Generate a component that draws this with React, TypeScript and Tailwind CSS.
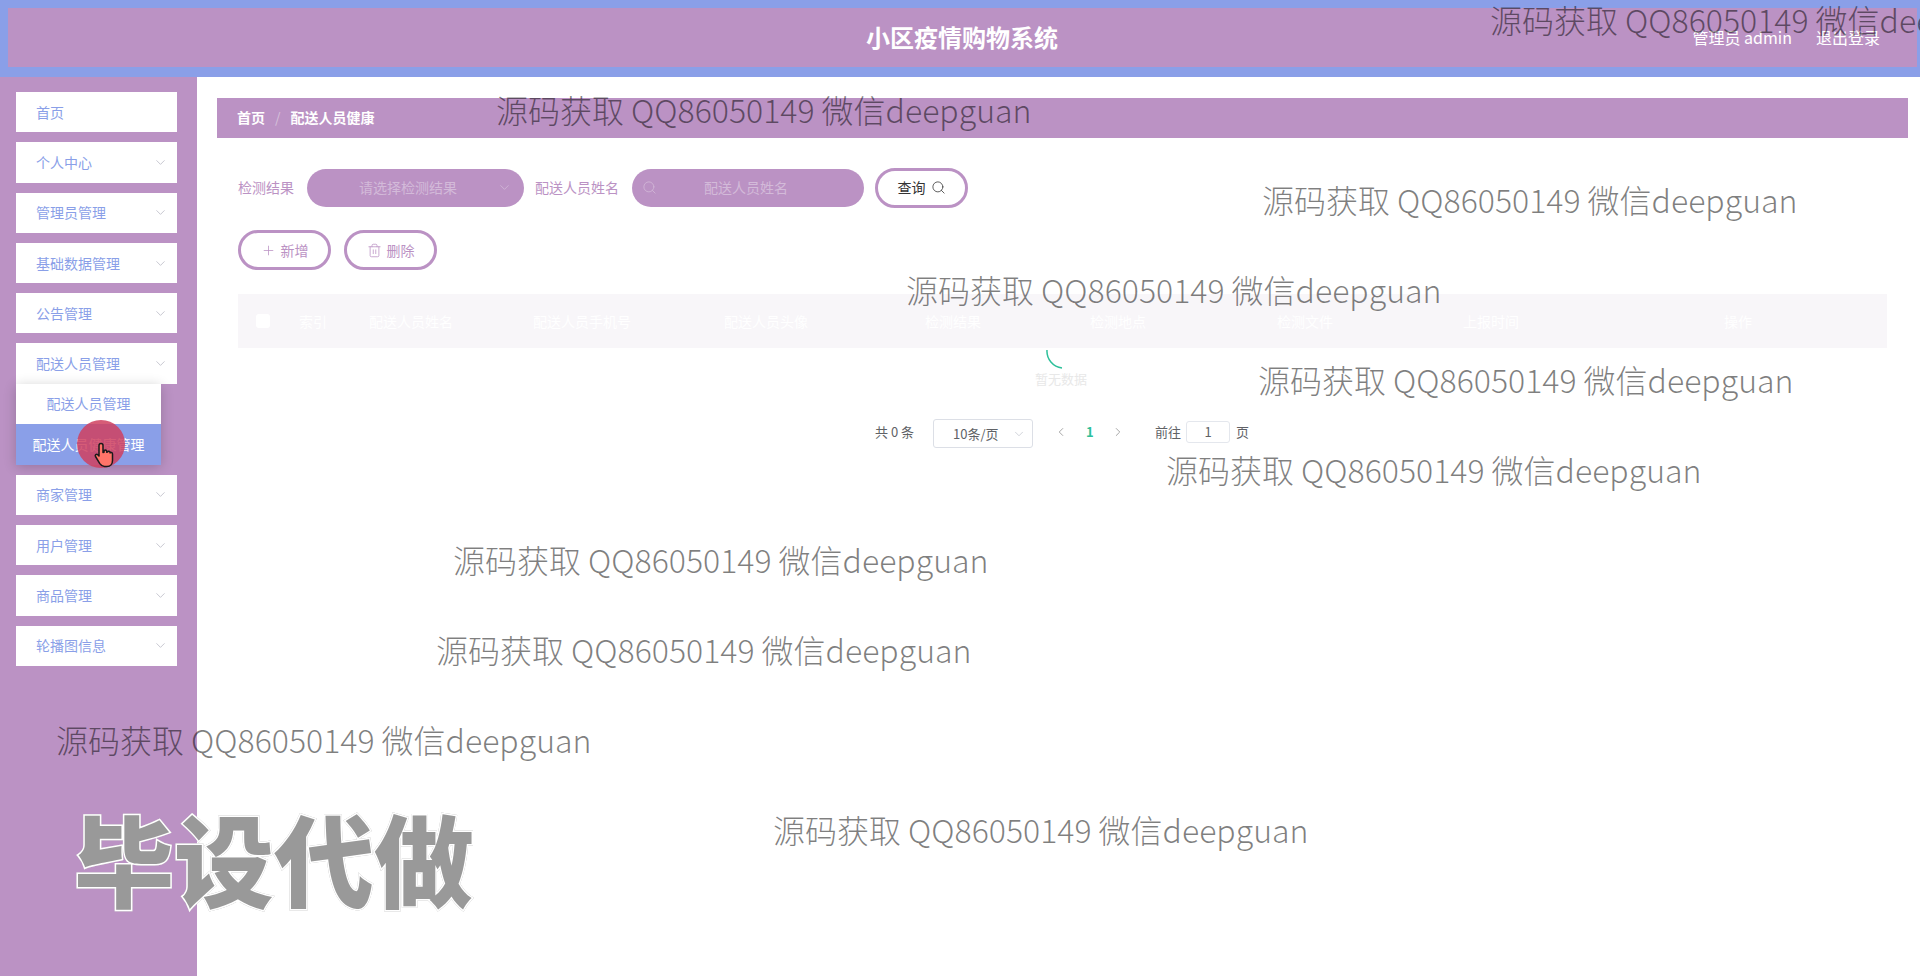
import { ChevronDown, ChevronLeft, ChevronRight, Plus, Search, Trash2 } from "lucide-react";

const menus = ["首页", "个人中心", "管理员管理", "基础数据管理", "公告管理", "配送人员管理"];
const menusAfter = ["商家管理", "用户管理", "商品管理", "轮播图信息"];

const columns = [
  { label: "索引", width: "w-[70px]" },
  { label: "配送人员姓名", width: "w-[164px]" },
  { label: "配送人员手机号", width: "w-[191px]" },
  { label: "配送人员头像", width: "w-[201px]" },
  { label: "检测结果", width: "w-[165px]" },
  { label: "检测地点", width: "w-[187px]" },
  { label: "检测文件", width: "w-[186px]" },
  { label: "上报时间", width: "w-[261px]" },
  { label: "操作", width: "w-[60px]" },
];

const watermarks = [
  "left-[1490px] top-[-5px]",
  "left-[496px] top-[85px]",
  "left-[1262px] top-[175px]",
  "left-[906px] top-[265px]",
  "left-[1258px] top-[355px]",
  "left-[1166px] top-[445px]",
  "left-[453px] top-[535px]",
  "left-[436px] top-[625px]",
  "left-[56px] top-[715px]",
  "left-[773px] top-[805px]",
];

function MenuItem({ label, arrow = true }: { label: string; arrow?: boolean }) {
  return (
    <div className="flex h-[40.3px] w-[161px] items-center justify-between bg-white pl-[20px] pr-[9px] text-[14px] text-[#8a9fe8]">
      <span>{label}</span>
      {arrow && <ChevronDown className="h-[15px] w-[15px] text-[#b9b9c4]" strokeWidth={1.25} />}
    </div>
  );
}

export default function App() {
  return (
    <div className="relative h-[976px] w-[1920px] overflow-hidden bg-white font-['Noto_Sans_CJK_SC','Noto_Sans',sans-serif]">
      <header className="flex h-[77px] items-center justify-between border-b-[10px] border-l-[8px] border-r-[3px] border-t-[8px] border-[#8a9fe8] bg-[#bb92c4] pb-[2px] pr-[37px]">
        <div className="pl-[858px] text-[24px] font-bold text-white">小区疫情购物系统</div>
        <div className="flex items-center gap-[24px] text-[16px] text-white">
          <span>管理员 admin</span>
          <span>退出登录</span>
        </div>
      </header>

      <div className="flex h-[899px]">
        <aside className="flex w-[197px] shrink-0 flex-col gap-[10px] bg-[#bb92c4] pl-[16px] pt-[15px]">
          {menus.map((m, i) => (
            <MenuItem key={m} label={m} arrow={i > 0} />
          ))}
          <div className="-mt-[10px] w-[145px] text-[14px] shadow-[0_2px_12px_rgba(0,0,0,0.2)]">
            <div className="flex h-[40px] items-center justify-center bg-white text-[#8a9fe8]">配送人员管理</div>
            <div className="flex h-[41px] items-center justify-center bg-[#8a9fe8] text-white">配送人员健康管理</div>
          </div>
          {menusAfter.map((m) => (
            <MenuItem key={m} label={m} />
          ))}
        </aside>

        <main className="flex-1 px-[20px] pt-[21px]">
          <div className="flex h-[40px] w-[1691px] items-center gap-[10px] bg-[#bb92c4] pb-[2px] pl-[20px] text-[14px] font-bold text-white">
            <span>首页</span>
            <span className="font-normal text-[#d5c0da]">/</span>
            <span>配送人员健康</span>
          </div>

          <div className="ml-[21px] mt-[31px] flex h-[38px] items-center text-[14px]">
            <span className="w-[69px] pb-[2px] text-[#bb92c4]">检测结果</span>
            <div className="flex h-[38px] w-[217px] items-center justify-between rounded-full bg-[#bb92c4] pb-[2px] pl-[52px] pr-[12px] text-[#d3bad9]">
              <span>请选择检测结果</span>
              <ChevronDown className="h-[15px] w-[15px]" strokeWidth={1.25} />
            </div>
            <span className="ml-[11px] w-[97px] pb-[2px] text-[#bb92c4]">配送人员姓名</span>
            <div className="flex h-[38px] w-[232px] items-center rounded-full bg-[#bb92c4] pb-[1px] pl-[10px] text-[#d3bad9]">
              <Search className="h-[15px] w-[15px]" strokeWidth={1.25} />
              <span className="ml-[47px]">配送人员姓名</span>
            </div>
            <div className="ml-[11px] flex h-[40px] w-[93px] items-center justify-center gap-[5px] rounded-full border-[3px] border-[#bb92c4] bg-white pb-[1px] text-[#333]">
              <span>查询</span>
              <Search className="h-[15px] w-[15px]" strokeWidth={1.25} />
            </div>
          </div>

          <div className="ml-[21px] mt-[23px] flex gap-[13px] text-[14px] text-[#bb92c4]">
            <div className="flex h-[40px] w-[93px] items-center justify-center gap-[5px] rounded-full border-[3px] border-[#bb92c4] bg-white">
              <Plus className="h-[15px] w-[15px]" strokeWidth={1.25} />
              <span>新增</span>
            </div>
            <div className="flex h-[40px] w-[93px] items-center justify-center gap-[5px] rounded-full border-[3px] border-[#bb92c4] bg-white">
              <Trash2 className="h-[15px] w-[15px]" strokeWidth={1.25} />
              <span>删除</span>
            </div>
          </div>

          <div className="ml-[21px] mt-[24px] flex h-[54px] w-[1649px] items-center bg-[#f8f6f9] text-[14px] text-white">
            <div className="w-[61px] pl-[18px]">
              <div className="h-[14px] w-[14px] rounded-[3px] bg-white" />
            </div>
            {columns.map((c) => (
              <div key={c.label} className={c.width}>
                {c.label}
              </div>
            ))}
          </div>

          <div className="relative ml-[21px] h-[69px] w-[1649px]">
            <svg className="absolute left-[808px] top-[1px] h-[22px] w-[20px]" viewBox="0 0 20 22" fill="none">
              <path d="M1 1 A17 17 0 0 0 16 19" stroke="#2dc09a" strokeWidth="1.5" />
            </svg>
            <div className="absolute left-[797px] top-[21px] text-[13px] text-[#e8e8e8]">暂无数据</div>
          </div>

          <div className="ml-[658px] flex h-[30px] items-center text-[13px] text-[#606266]">
            <span className="w-[58px]">共 0 条</span>
            <div className="mt-[3px] flex h-[29px] w-[100px] items-center justify-between rounded-[3px] border border-[#dcdfe6] pl-[19px] pr-[6px]">
              <span>10条/页</span>
              <ChevronDown className="h-[14px] w-[14px] text-[#c0c4cc]" strokeWidth={1.25} />
            </div>
            <ChevronLeft className="ml-[21px] h-[14px] w-[14px] text-[#9a9a9a]" strokeWidth={1.5} />
            <span className="ml-[18px] w-[8px] font-bold text-[#2dc09a]">1</span>
            <ChevronRight className="ml-[17px] h-[14px] w-[14px] text-[#9a9a9a]" strokeWidth={1.5} />
            <span className="ml-[30px]">前往</span>
            <div className="ml-[5px] flex h-[22px] w-[44px] items-center justify-center rounded-[3px] border border-[#e4e7ed]">1</div>
            <span className="ml-[6px]">页</span>
          </div>
        </main>
      </div>

      {/* cursor highlight from the screen recording */}
      <div className="absolute left-[77px] top-[420px] h-[48px] w-[48px] rounded-full bg-[#cf3f5f]/85" />
      <svg className="absolute left-[93px] top-[441px] h-[28px] w-[24px]" viewBox="0 0 24 28">
        <path
          d="M8 2.5c1.2 0 2 .9 2 2v7l1-.3v-1c0-1.500 2.600-1.500 2.700 0v1l.8-.1c.3-1.300 2.500-1.200 2.600.3v.6c.5-.9 2.400-.7 2.400.9v6.600c0 3.500-2.200 6-5.500 6h-2.500c-2.200 0-3.500-1-4.700-2.800L2.500 15.500c-.9-1.500.9-3 2.300-1.800L6 15V4.500c0-1.100.8-2 2-2z"
          fill="#ff7468"
          stroke="#1a1a1a"
          strokeWidth="1.5"
          strokeLinejoin="round"
        />
      </svg>

      {watermarks.map((pos) => (
        <div key={pos} className={`pointer-events-none absolute ${pos} whitespace-nowrap text-[32px] font-light text-black/50`}>
          源码获取 QQ86050149 微信deepguan
        </div>
      ))}

      <div className="pointer-events-none absolute left-[74px] top-[782px] whitespace-nowrap text-[100px] font-black leading-[150px] text-[#999] [-webkit-text-stroke:3px_#fff] [paint-order:stroke_fill] [filter:drop-shadow(0_0_0.5px_#aaa)]">
        毕设代做
      </div>
    </div>
  );
}
